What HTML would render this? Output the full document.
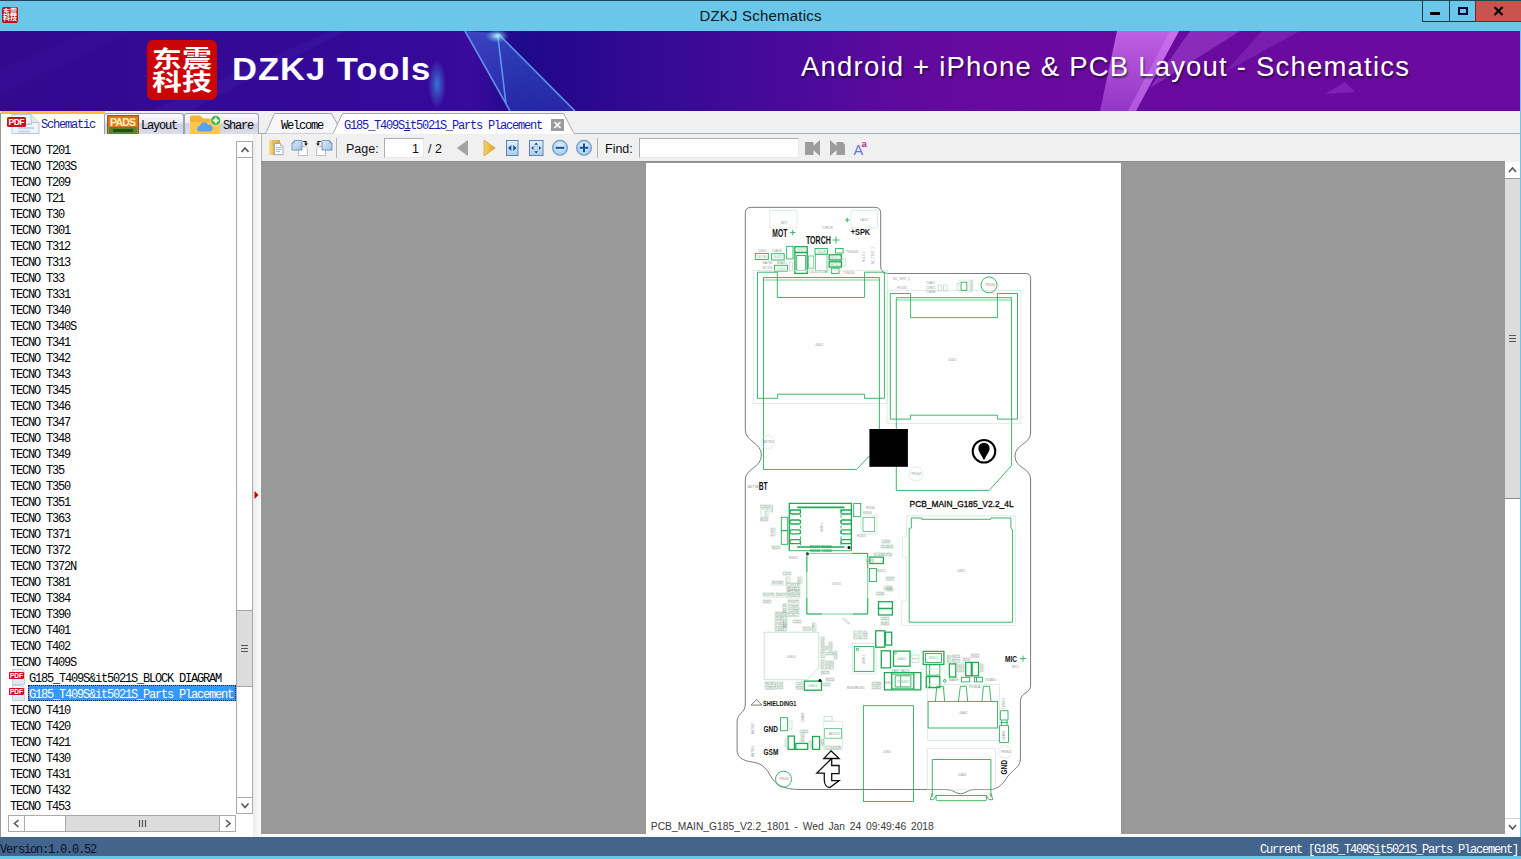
<!DOCTYPE html>
<html lang="en">
<head>
<meta charset="utf-8">
<title>DZKJ Schematics</title>
<style>
*{box-sizing:border-box;margin:0;padding:0}
html,body{width:1521px;height:859px;overflow:hidden;background:#6bc7ea}
body{position:relative;font-family:"Liberation Sans","Noto Sans CJK SC",sans-serif;font-size:12px;color:#000}
.abs{position:absolute}
.mono{font-family:"Liberation Mono","Noto Sans CJK SC",monospace;font-size:12px;letter-spacing:-1.2px;white-space:pre}
/* title bar */
#titlebar{left:0;top:0;width:1521px;height:31px;background:#6bc7ea;border-top:1px solid #1d4656}
#title{left:0;top:6px;width:1521px;text-align:center;font-size:15px;line-height:18px;color:#0a1420;letter-spacing:.2px}
#appicon{left:2px;top:6px;width:16px;height:16px;background:#b5121b;border-radius:2px;overflow:hidden}
#appicon div{position:absolute;left:1px;top:1.500px;width:14px;color:#fff;font-family:"Liberation Sans","Noto Sans CJK SC",sans-serif;font-weight:700;font-size:7px;line-height:6.500px;text-align:center}
.wbtn{top:0;height:21px;border:1px solid #0d3a4c;border-top:none}
/* banner */
#banner{left:0;top:31px;width:1520px;height:80px;overflow:hidden;background:linear-gradient(90deg,#33098f 0%,#35099a 28%,#3a0a9c 31%,#1e0a8a 34.500%,#25088c 36.800%,#340a92 42.800%,#3f0a97 48%,#4b0a9a 52.600%,#5e0a9d 59.200%,#690a9e 65.800%,#6b0a9e 100%)}
#logo{left:147px;top:9px;width:70px;height:60px;background:#cb0505;border-radius:6px;overflow:hidden}
#logo div{position:absolute;left:0;top:8px;width:70px;color:#fff;font-family:"Liberation Sans","Noto Sans CJK SC",sans-serif;font-weight:700;font-size:23px;line-height:23px;text-align:center;transform:scaleX(1.3)}
#brand{left:232px;top:16px;font-size:32px;line-height:44px;font-weight:700;color:#fff;letter-spacing:.9px;white-space:nowrap;transform:scaleX(1.08);transform-origin:0 0}
#slogan{left:801px;top:18px;font-size:27.5px;line-height:36px;color:#fff;text-shadow:1px 2px 2px rgba(0,0,0,.55);white-space:nowrap;letter-spacing:1.2px}
/* main */
#main{left:0;top:111px;width:1520px;height:726px;background:#f0f0f0}

/* left tabs */
#ltabs{left:0;top:0;width:262px;height:23px}
.ltab{top:2px;height:21px;border:1px solid #9aa0b4;border-bottom:none;border-radius:3px 3px 0 0;background:linear-gradient(#fdfdfe,#e9e9f3 45%,#cfd0e2 50%,#dcdcea);}
.ltab .mono{top:5px;line-height:14px}
#tab1{left:1px;top:0;width:104px;height:23px;background:#fff;border:none;border-top:3px solid #fdb940;border-radius:0}
#tabline{left:105px;top:22px;width:1415px;height:1px;background:#a3aec0}
/* list */
#lpanel{left:0;top:23px;width:253px;height:703px;background:#fff;border-left:1px solid #999}
.row{left:0;width:236px;height:16px}
.lbl{top:0;height:16px;line-height:16px;padding:2px 1px 0 1px}
.sel{background:#3399ff;color:#fff;outline:1px dotted #222;outline-offset:-1px;padding-right:3px}
.pdfi{left:7px;top:0;width:16px;height:16px}
.pdfi i{position:absolute;left:4px;top:0;width:13px;height:16px;background:linear-gradient(#f4f8fc,#dbe7f3);border:1px solid #c5d0de;border-radius:0 4px 0 0}
.pdfi b{position:absolute;left:1px;top:3px;width:15px;height:7px;background:#c4141c;color:#fff;font:700 6.500px/7px "Liberation Sans",sans-serif;text-align:center;border-radius:1px;letter-spacing:0}
.sb{background:#fff;border:1px solid #ababab}
.thumb{background:#dcdcdc;border:1px solid #a6a6a6}
.chev{stroke:#555;stroke-width:1.6;fill:none}
#split{left:253px;top:23px;width:8px;height:703px;background:linear-gradient(90deg,#ececec,#fbfbfb)}
/* doc tabs */
#dtabs{left:262px;top:0;width:1258px;height:23px}
/* toolbar */
#tool{left:262px;top:23px;width:1258px;height:28px;background:#f0f0f0;box-shadow:-1px 0 0 #b4b4b4}
#tool .t{top:7px;line-height:17px;font-size:12.500px;color:#111}
.inp{background:#fff;border:1px solid #abadb3;border-right-color:#e3e9ef;border-bottom-color:#e3e9ef}
.sep{top:4px;width:1px;height:20px;background:#b4b4b4}
/* viewer */
#viewer{left:261px;top:50px;width:1244px;height:673px;background:#999;border-top:1px solid #8c8c8c}
#page{left:385px;top:1px;width:475px;height:671px;background:#fff}
#vsb{left:1505px;top:51px;width:15px;height:672px;background:#fff}
#vbot{left:262px;top:723px;width:1258px;height:3px;background:#fafafa}
#status{left:0;top:837px;width:1521px;height:19px;background:#44658b}
</style>
</head>
<body>
<div id="titlebar" class="abs">
  <div id="appicon" class="abs"><div>东震<br>科技</div></div>
  <div id="title" class="abs">DZKJ Schematics</div>
  <div class="abs wbtn" style="left:1422px;width:28px"><div class="abs" style="left:7px;top:11px;width:10px;height:3px;background:#000"></div></div>
  <div class="abs wbtn" style="left:1449px;width:27px"><div class="abs" style="left:8px;top:6px;width:10px;height:8px;border:2px solid #02023a;border-top-width:2.500px"></div></div>
  <div class="abs wbtn" style="left:1475px;width:46px;background:#c9544f;border-color:#6e2a2a;border-right:none"><svg class="abs" style="left:17px;top:5px" width="12" height="10"><path d="M1.500 1l8 8M9.500 1l-8 8" stroke="#000" stroke-width="2.200"/></svg></div>
</div>
<div id="banner" class="abs">
  <svg class="abs" style="left:0;top:0" width="1520" height="80" viewBox="0 31 1520 80">
    <defs>
      <linearGradient id="bm1" x1="0" y1="0" x2="0" y2="1"><stop offset="0" stop-color="#3f7be6" stop-opacity=".5"/><stop offset="1" stop-color="#2a55cf" stop-opacity=".4"/></linearGradient>
      <linearGradient id="bm2" x1="0" y1="0" x2="0" y2="1"><stop offset="0" stop-color="#d070f0" stop-opacity=".85"/><stop offset="1" stop-color="#b055e0" stop-opacity=".6"/></linearGradient>
      <radialGradient id="gl1"><stop offset="0" stop-color="#bff" stop-opacity=".95"/><stop offset="1" stop-color="#5ad" stop-opacity="0"/></radialGradient>
      <radialGradient id="gl2"><stop offset="0" stop-color="#3aa0e8" stop-opacity=".7"/><stop offset="1" stop-color="#3aa0e8" stop-opacity="0"/></radialGradient>
    </defs>
    <path d="M0 70L90 31H130L0 95Z" fill="#4a28b8" opacity=".12"/>
    <path d="M150 111L330 31H345L190 111Z" fill="#4a30c0" opacity=".18"/>
    <path d="M465 31L510 111H575L497.500 33Z" fill="url(#bm1)"/>
    <path d="M465 31L510 111M497.500 33L506 104M497.500 33L575 111" stroke="#6aaeff" stroke-width="1.600" fill="none" opacity=".8"/>
    <ellipse cx="497" cy="36" rx="12" ry="7" fill="url(#gl1)"/>
    <ellipse cx="437" cy="84" rx="9" ry="24" fill="url(#gl2)"/>
    <path d="M1117 31H1179L1136 111H1100Z" fill="url(#bm2)"/>
    <path d="M1170 31H1179L1136 111H1128Z" fill="#e090ff" opacity=".35"/>
    <path d="M1190 31H1240L1150 88Z" fill="#b860e8" opacity=".4"/>
    <path d="M1262 31H1300L1225 72Z" fill="#a050d8" opacity=".3"/>
    <path d="M1325 94L1345 82L1355 92Z" fill="#a050d8" opacity=".35"/>
  </svg>
  <div id="logo" class="abs"><div>东震<br>科技</div></div>
  <div id="brand" class="abs">DZKJ Tools</div>
  <div id="slogan" class="abs">Android + iPhone &amp; PCB Layout - Schematics</div>
</div>
<div id="main" class="abs">
  <div id="tabline" class="abs"></div>
  <div id="ltabs" class="abs">
    <div id="tab1" class="abs ltab">
      <svg class="abs" style="left:5px;top:0" width="36" height="20" viewBox="0 0 36 20"><path d="M6 .5h19l8 8v11H6z" fill="#eef4fb" stroke="#b9c6d8"/><path d="M25 .5v8h8" fill="#dfe9f5" stroke="#b9c6d8"/><rect x="12" y="9" width="14" height="2" fill="#bcd4ec"/><rect x="12" y="13" width="16" height="2" fill="#bcd4ec"/><rect x="12" y="16.5" width="12" height="2" fill="#c9d5e4"/><rect x="1" y="3" width="19" height="10" rx="1.5" fill="#c3131c"/><text x="10.5" y="11" font-family="Liberation Sans,sans-serif" font-weight="700" font-size="8.5" fill="#fff" text-anchor="middle" textLength="16">PDF</text></svg>
      <div class="abs mono" style="left:40px;top:4px;line-height:14px;color:#1818b0">Schematic</div>
    </div>
    <div class="abs ltab" style="left:104px;width:80px">
      <svg class="abs" style="left:2px;top:1px" width="32" height="20" viewBox="0 0 32 20"><rect x=".5" y=".5" width="31" height="19" fill="#d9721c" stroke="#8a5a2a"/><rect x="2" y="2" width="28" height="10" fill="#e07a18"/><rect x="2" y="12" width="28" height="7" fill="#4f8a2a"/><rect x="6" y="14" width="20" height="3" fill="#2d4a22"/><text x="16" y="11" font-family="Liberation Sans,sans-serif" font-weight="700" font-size="10.5" fill="#fff6c8" text-anchor="middle" textLength="26">PADS</text></svg>
      <div class="abs mono" style="left:36px">Layout</div>
    </div>
    <div class="abs ltab" style="left:184px;width:75px">
      <svg class="abs" style="left:5px;top:0" width="34" height="20" viewBox="0 0 34 20"><path d="M0 3.500q0-2 2-2h8l3 3h15q2 0 2 2v14H0z" fill="#f5b335"/><path d="M0 8h30v12H0z" fill="#fcc74c"/><path d="M9 17.500a3 3 0 0 1 1-5.800 4.500 4.500 0 0 1 8.500-.7 3.300 3.300 0 0 1 1.500 6.500z" fill="#58a2ee"/><circle cx="25.700" cy="6.500" r="5" fill="#3dae3a" stroke="#e8f6e0" stroke-width=".8"/><path d="M22.700 6.500h6M25.700 3.500v6" stroke="#fff" stroke-width="2"/></svg>
      <div class="abs mono" style="left:38px">Share</div>
    </div>
  </div>
  <div id="lpanel" class="abs">
<div class="row abs" style="top:7px"><span class="mono lbl abs" style="left:8px">TECNO T201</span></div>
<div class="row abs" style="top:23px"><span class="mono lbl abs" style="left:8px">TECNO T203S</span></div>
<div class="row abs" style="top:39px"><span class="mono lbl abs" style="left:8px">TECNO T209</span></div>
<div class="row abs" style="top:55px"><span class="mono lbl abs" style="left:8px">TECNO T21</span></div>
<div class="row abs" style="top:71px"><span class="mono lbl abs" style="left:8px">TECNO T30</span></div>
<div class="row abs" style="top:87px"><span class="mono lbl abs" style="left:8px">TECNO T301</span></div>
<div class="row abs" style="top:103px"><span class="mono lbl abs" style="left:8px">TECNO T312</span></div>
<div class="row abs" style="top:119px"><span class="mono lbl abs" style="left:8px">TECNO T313</span></div>
<div class="row abs" style="top:135px"><span class="mono lbl abs" style="left:8px">TECNO T33</span></div>
<div class="row abs" style="top:151px"><span class="mono lbl abs" style="left:8px">TECNO T331</span></div>
<div class="row abs" style="top:167px"><span class="mono lbl abs" style="left:8px">TECNO T340</span></div>
<div class="row abs" style="top:183px"><span class="mono lbl abs" style="left:8px">TECNO T340S</span></div>
<div class="row abs" style="top:199px"><span class="mono lbl abs" style="left:8px">TECNO T341</span></div>
<div class="row abs" style="top:215px"><span class="mono lbl abs" style="left:8px">TECNO T342</span></div>
<div class="row abs" style="top:231px"><span class="mono lbl abs" style="left:8px">TECNO T343</span></div>
<div class="row abs" style="top:247px"><span class="mono lbl abs" style="left:8px">TECNO T345</span></div>
<div class="row abs" style="top:263px"><span class="mono lbl abs" style="left:8px">TECNO T346</span></div>
<div class="row abs" style="top:279px"><span class="mono lbl abs" style="left:8px">TECNO T347</span></div>
<div class="row abs" style="top:295px"><span class="mono lbl abs" style="left:8px">TECNO T348</span></div>
<div class="row abs" style="top:311px"><span class="mono lbl abs" style="left:8px">TECNO T349</span></div>
<div class="row abs" style="top:327px"><span class="mono lbl abs" style="left:8px">TECNO T35</span></div>
<div class="row abs" style="top:343px"><span class="mono lbl abs" style="left:8px">TECNO T350</span></div>
<div class="row abs" style="top:359px"><span class="mono lbl abs" style="left:8px">TECNO T351</span></div>
<div class="row abs" style="top:375px"><span class="mono lbl abs" style="left:8px">TECNO T363</span></div>
<div class="row abs" style="top:391px"><span class="mono lbl abs" style="left:8px">TECNO T371</span></div>
<div class="row abs" style="top:407px"><span class="mono lbl abs" style="left:8px">TECNO T372</span></div>
<div class="row abs" style="top:423px"><span class="mono lbl abs" style="left:8px">TECNO T372N</span></div>
<div class="row abs" style="top:439px"><span class="mono lbl abs" style="left:8px">TECNO T381</span></div>
<div class="row abs" style="top:455px"><span class="mono lbl abs" style="left:8px">TECNO T384</span></div>
<div class="row abs" style="top:471px"><span class="mono lbl abs" style="left:8px">TECNO T390</span></div>
<div class="row abs" style="top:487px"><span class="mono lbl abs" style="left:8px">TECNO T401</span></div>
<div class="row abs" style="top:503px"><span class="mono lbl abs" style="left:8px">TECNO T402</span></div>
<div class="row abs" style="top:519px"><span class="mono lbl abs" style="left:8px">TECNO T409S</span></div>
<div class="row abs" style="top:535px"><span class="pdfi abs"><i></i><b>PDF</b></span><span class="mono lbl abs" style="left:27px">G185_T409S&amp;it5021S_BLOCK DIAGRAM</span></div>
<div class="row abs" style="top:551px"><span class="pdfi abs"><i></i><b>PDF</b></span><span class="mono lbl sel abs" style="left:27px">G185_T409S&amp;it5021S_Parts Placement</span></div>
<div class="row abs" style="top:567px"><span class="mono lbl abs" style="left:8px">TECNO T410</span></div>
<div class="row abs" style="top:583px"><span class="mono lbl abs" style="left:8px">TECNO T420</span></div>
<div class="row abs" style="top:599px"><span class="mono lbl abs" style="left:8px">TECNO T421</span></div>
<div class="row abs" style="top:615px"><span class="mono lbl abs" style="left:8px">TECNO T430</span></div>
<div class="row abs" style="top:631px"><span class="mono lbl abs" style="left:8px">TECNO T431</span></div>
<div class="row abs" style="top:647px"><span class="mono lbl abs" style="left:8px">TECNO T432</span></div>
<div class="row abs" style="top:663px"><span class="mono lbl abs" style="left:8px">TECNO T453</span></div>
    <div class="abs sb" style="left:235px;top:7px;width:17px;height:673px"></div>
    <div class="abs sb" style="left:235px;top:7px;width:17px;height:17px"><svg width="15" height="15"><path class="chev" d="M4.5 10l3.5-4 3.500 4"/></svg></div>
    <div class="abs sb" style="left:235px;top:663px;width:17px;height:17px"><svg width="15" height="15"><path class="chev" d="M4.5 5.500l3.500 4 3.500-4"/></svg></div>
    <div class="abs thumb" style="left:235px;top:476px;width:17px;height:77px"><svg width="15" height="75"><path d="M4 34.500h7M4 37.500h7M4 40.500h7" stroke="#555" stroke-width="1.200"/></svg></div>
    <div class="abs sb" style="left:7px;top:681px;width:228px;height:17px"></div>
    <div class="abs sb" style="left:7px;top:681px;width:17px;height:17px"><svg width="15" height="15"><path class="chev" d="M9.500 4l-4 3.500 4 3.500"/></svg></div>
    <div class="abs sb" style="left:218px;top:681px;width:17px;height:17px"><svg width="15" height="15"><path class="chev" d="M6 4l4 3.500-4 3.500"/></svg></div>
    <div class="abs thumb" style="left:64px;top:681px;width:155px;height:17px"><svg width="153" height="15"><path d="M73.500 4v7M76.500 4v7M79.500 4v7" stroke="#555" stroke-width="1.200"/></svg></div>
  </div>
  <div id="split" class="abs"><svg class="abs" style="left:1px;top:356px" width="6" height="10"><path d="M.5 1l4 4-4 4z" fill="#c00000"/></svg></div>
  <div id="dtabs" class="abs">
    <svg class="abs" style="left:0;top:0" width="330" height="23" viewBox="0 0 330 23">
      <path d="M3.500 22.500L12.500 2.500H69.500L80.500 22.500" fill="#f6f6f8" stroke="#a4a4ac"/>
      <path d="M71 22.500L80.500 2.500H301.500L312 22.500" fill="#fff" stroke="#a4a4ac"/>
      <path d="M71.500 22.500H311.500" stroke="#fff" stroke-width="1.500"/>
      <rect x="289" y="8" width="13" height="12" fill="#9c9c9c"/><path d="M292.500 11l6 6M298.500 11l-6 6" stroke="#fff" stroke-width="1.700"/>
    </svg>
    <div class="abs mono" style="left:19px;top:8px;line-height:14px">Welcome</div>
    <div class="abs mono" style="left:82px;top:8px;line-height:14px;color:#1818b0">G185_T409S<u>i</u>t5021S_Parts Placement</div>
  </div>
  <div id="tool" class="abs">
    <div class="abs t" style="left:84px">Page:</div>
    <div class="abs inp" style="left:122px;top:4px;width:40px;height:20px"></div>
    <div class="abs t" style="left:150px">1</div>
    <div class="abs t" style="left:166px">/ 2</div>
    <div class="abs sep" style="left:74px"></div>
    <div class="abs sep" style="left:335px"></div>
    <div class="abs t" style="left:343px">Find:</div>
    <div class="abs inp" style="left:377px;top:4px;width:160px;height:20px"></div>
    <svg class="abs" style="left:0;top:0" width="620" height="28" viewBox="262 134 620 28">
      <defs>
        <linearGradient id="gbook" x1="0" x2="1" y1="0" y2="0"><stop offset="0" stop-color="#f7dc8a"/><stop offset="1" stop-color="#d9a53a"/></linearGradient>
        <linearGradient id="gblue" x1="0" x2="0" y1="0" y2="1"><stop offset="0" stop-color="#e4f0fb"/><stop offset="1" stop-color="#a9cdee"/></linearGradient>
        <linearGradient id="gpg" x1="0" x2="1" y1="0" y2="1"><stop offset="0" stop-color="#dcebf9"/><stop offset="1" stop-color="#9fc3e6"/></linearGradient>
        <linearGradient id="ggold" x1="0" x2="1" y1="0" y2="0"><stop offset="0" stop-color="#f2d263"/><stop offset="1" stop-color="#d9a521"/></linearGradient>
        <radialGradient id="gcirc" cx=".5" cy=".35" r=".7"><stop offset="0" stop-color="#e6f3fd"/><stop offset="1" stop-color="#8fc4ee"/></radialGradient>
      </defs>
      <!-- book/paste -->
      <path d="M269 140.500q0-.5.500-.500h10.500v15h-10.500q-.5 0-.5-.5z" fill="url(#gbook)"/>
      <path d="M273.300 140v15" stroke="#c9962e" stroke-width=".7" opacity=".6"/>
      <path d="M274.500 143.500h6l2.500 2.500v8.700h-8.500z" fill="#fff" stroke="#8f98a8" stroke-width=".8"/>
      <path d="M280.500 143.500v2.500h2.500" fill="#e6eef6" stroke="#8f98a8" stroke-width=".6"/>
      <path d="M276 147.500h5.500M276 149.500h5.500M276 151.500h4" stroke="#7fb0c4" stroke-width=".8"/>
      <!-- copy pages 1 -->
      <path d="M298.500 146.500h6.500l2.500 2.500v6.500h-9z" fill="#fff" stroke="#b0b6c0" stroke-width=".9"/>
      <path d="M294.500 140.500h7.500v9.500h-10v-7z" fill="url(#gpg)" stroke="#6f8fb4" stroke-width=".9"/>
      <path d="M292 143h2.500v-2.500" fill="none" stroke="#6f8fb4" stroke-width=".7"/>
      <path d="M303.300 141.500h2.700v2.300" stroke="#111" stroke-width="1.200" fill="none"/><path d="M304 143.500h4l-2 2.200z" fill="#111"/>
      <!-- copy pages 2 -->
      <path d="M319 146.500h6.500v9h-9v-6.500z" fill="#fff" stroke="#b0b6c0" stroke-width=".9"/>
      <path d="M322 140.500h7.500l2.500 2.500v7h-10z" fill="url(#gpg)" stroke="#6f8fb4" stroke-width=".9"/>
      <path d="M329.500 140.500v2.500h2.500" fill="none" stroke="#6f8fb4" stroke-width=".7"/>
      <path d="M320.700 141.500h-2.700v2.300" stroke="#111" stroke-width="1.200" fill="none"/><path d="M316 143.500h4l-2 2.200z" fill="#111"/>
      <!-- prev / next -->
      <path d="M468 140v16l-11.200-8z" fill="#a2a2a2"/>
      <path d="M484 140v16l11.200-8z" fill="url(#ggold)" stroke="#c99a22" stroke-width=".6"/>
      <!-- fit width -->
      <rect x="506.500" y="140.500" width="11.500" height="15" fill="url(#gblue)" stroke="#5c82b4"/>
      <path d="M511.300 145v6l-3.300-3zM513.200 145v6l3.300-3z" fill="#1d4f8c"/>
      <!-- fit page -->
      <rect x="529.500" y="140.500" width="13.500" height="15" fill="url(#gblue)" stroke="#5c82b4"/>
      <path d="M536.200 142.500l2 2.200h-4zM536.200 153.500l2-2.200h-4zM531.200 148l2.200-2v4zM541.200 148l-2.200-2v4z" fill="#1d4f8c"/>
      <rect x="534.700" y="146.500" width="3" height="3" fill="#dce9f6" stroke="#9ab4d2" stroke-width=".6"/>
      <!-- zoom out / in -->
      <circle cx="560" cy="147.800" r="7.400" fill="url(#gcirc)" stroke="#6f96c4" stroke-width="1.100"/>
      <path d="M555.800 147.800h8.400" stroke="#1d4f8c" stroke-width="2"/>
      <circle cx="584" cy="147.800" r="7.400" fill="url(#gcirc)" stroke="#6f96c4" stroke-width="1.100"/>
      <path d="M579.800 147.800h8.400M584 143.600v8.400" stroke="#1d4f8c" stroke-width="2"/>
      <!-- find prev/next -->
      <path d="M805 142h8.500v13H805z" fill="#9c9c9c"/><path d="M820 140v16l-9-8z" fill="#9c9c9c"/>
      <path d="M836.500 142h6l2.500 2.500v10.500h-8.500z" fill="#9c9c9c"/><path d="M830 140v16l9-8z" fill="#9c9c9c"/>
      <text x="853.500" y="155" font-family="Liberation Sans,sans-serif" font-size="14.500" fill="#6f6fe0">A</text>
      <text x="861.500" y="147.300" font-family="Liberation Sans,sans-serif" font-size="9.500" font-weight="700" fill="#b0308c">a</text>
    </svg>
  </div>
  <div id="viewer" class="abs">
    <div id="page" class="abs">
<svg class="abs" style="left:0;top:0" width="475" height="671" viewBox="646 163 475 671">
<style>
.g{fill:none;stroke:#25b15a;stroke-width:.9}
.g2{fill:none;stroke:#1cab51;stroke-width:1.3}
.gt{fill:none;stroke:#3dbb6d;stroke-width:.7}
.p{fill:none;stroke:#b7d9c3;stroke-width:.7}
.pp{fill:none;stroke:#d3e4d9;stroke-width:.7}
.o{fill:none;stroke:#444;stroke-width:.7}
.lb{font-family:"Liberation Sans",sans-serif;font-weight:700;fill:#111}
.tt{font-family:"Liberation Sans",sans-serif;fill:#8e9891;font-size:3px}
.tg{font-family:"Liberation Sans",sans-serif;fill:#6fbf8b;font-size:3px}
</style>
<!-- board outline -->
<path class="o" d="M751.300 207.300H874.700Q880.700 207.300 880.700 213.300V266Q880.700 273.500 888 273.500H1025.600Q1030.600 273.500 1030.600 278.500V433C1030.600 444 1015 444 1015 456.200C1015 468 1030.600 468 1030.600 479V685C1030.600 694 1020.400 692 1020.400 701V758C1020.400 768 1012 770 1008 776C1003 784 998 789.500 990 789.500H974C968 789.500 966 793.700 960.500 793.700C955 793.700 953 789.500 947 789.500H800C782 789.500 775 784 770 775C765 766 760 763 752 762C742 760.500 737.100 757 737.100 750V722C737.100 712 745.300 714 745.300 704V480C745.300 468 761.400 468 761.400 455C761.400 442 745.300 442 745.300 430V213.300Q745.300 207.300 751.300 207.300Z"/>
<!-- top labels -->
<rect class="pp" x="769.800" y="210.500" width="27.200" height="17.500"/>
<rect class="pp" x="851" y="210.500" width="26.500" height="17.500"/>
<text class="tt" x="781" y="224">MOT</text><text class="tt" x="860" y="221">LA/JC</text><text class="tt" x="822" y="229">TORCH</text>
<text class="lb" x="772.300" y="236.800" font-size="10" textLength="15" lengthAdjust="spacingAndGlyphs">MOT</text>
<text class="lb" x="805.900" y="244.200" font-size="10" textLength="25" lengthAdjust="spacingAndGlyphs">TORCH</text>
<text class="lb" x="850.700" y="235.300" font-size="9.500" textLength="19.500" lengthAdjust="spacingAndGlyphs">+SPK</text>
<path class="g" d="M790 232.500h5.400M792.700 229.800v5.400M832.500 240h7M836 236.500v7M845 220h4.600M847.300 217.700v4.600" stroke-width=".9"/>
<text class="tt" transform="translate(865,262) rotate(-90)" font-size="3.500">HOLE1</text>
<text class="tt" transform="translate(873.500,264) rotate(-90)" font-size="3.500">NC_TEST_1</text>
<!-- small parts row -->
<rect class="g" x="755.300" y="253.500" width="13" height="6"/>
<rect class="g" x="771.600" y="253.700" width="12.600" height="6.300"/>
<rect class="g" x="786.700" y="246.400" width="6.300" height="12.500"/>
<rect class="g2" x="794.900" y="246.700" width="12.300" height="5.800"/>
<rect class="g2" x="794.900" y="252.500" width="12.300" height="20.900"/>
<rect class="g" x="796.700" y="255.500" width="9" height="15"/>
<rect class="g" x="774.500" y="265.300" width="13" height="5.800"/>
<rect class="gt" x="808.500" y="256" width="5.300" height="12.200"/>
<rect class="g" x="815" y="248.600" width="12.400" height="5.600"/>
<rect class="gt" x="815.500" y="254.200" width="11.500" height="16.300"/>
<rect class="g2" x="829.200" y="254.800" width="12.200" height="5.200"/>
<rect class="g2" x="829.200" y="261.800" width="12.200" height="5.200"/>
<rect class="g" x="835.600" y="248.400" width="7.500" height="4.600"/>
<rect class="g" x="831.600" y="268.200" width="7.400" height="5.200"/>
<rect class="p" x="843" y="258" width="2.500" height="8"/><rect class="p" x="789.500" y="262" width="3" height="9"/>
<text class="tt" x="758" y="252">C0001</text><text class="tt" x="772" y="252">C0A1B</text><text class="tt" x="763" y="264">EA70K</text><text class="tt" x="763" y="269">EC70K</text><text class="tt" x="777" y="264">B0A0C</text>
<text class="tt" x="846" y="252.500">TVS0001</text><text class="tt" x="843" y="274">TVS0U6</text><text class="tt" x="809" y="272.500">C0C01 E10AK</text>
<text class="tg" x="757.500" y="257.800">NCYEL</text><text class="tg" x="774" y="258">NJ0YY</text><text class="tg" x="797" y="251">VOLTD</text><text class="tg" x="818" y="253">NL1EI</text><text class="tg" x="831" y="259">HC5L2Y</text><text class="tg" x="831" y="266">HC0L2</text><text class="tg" x="777" y="269.500">LLYLL</text>
<!-- connector 1 -->
<rect class="pp" x="753.500" y="270.500" width="133.800" height="133"/>
<path class="g" d="M757.500 272.200H777.300V297.500H864.600V272.200H884.400V398.300H864.600V394.200H777.700V398.300H757.500Z"/>
<path class="g" d="M869.300 456L856.500 469.500H763.500V277.500H879.400V429"/>
<path class="gt" d="M763.500 280H879.400" />
<text class="tt" x="815" y="345.500">J0001</text>
<circle class="pp" cx="768" cy="442" r="6.500" stroke="#c4d0c8"/><text class="tt" x="763" y="443">ANT301</text>
<!-- connector 2 -->
<rect class="pp" x="887" y="290.600" width="134" height="132.700"/>
<path class="g" d="M890.300 293.500H910.600V317.700H997.400V293.500H1017.500V419.100H997.300V415.200H910.500V419.100H890.300Z"/>
<path class="g" d="M896.300 297.700H1011.600V465.500L989.200 490.400H896.300Z"/>
<path class="gt" d="M896.300 300H1011.600"/>
<text class="tt" x="948" y="361">J0002</text>
<circle class="g" cx="989" cy="284.900" r="8"/><text x="985" y="286" font-size="3" fill="#c77" font-family="Liberation Sans,sans-serif">TP0005</text>
<rect class="g" x="961" y="282.200" width="5.800" height="8.200"/><rect class="p" x="957" y="283.500" width="3.500" height="7"/><rect class="pp" x="959" y="280" width="10" height="12"/>
<text class="tt" x="893" y="280" font-size="3.500">NC_TEST_2</text><text class="tt" x="897" y="289" font-size="3.500">HOLE2</text>
<text class="tt" x="926" y="284">C0A07</text><text class="tt" x="926" y="288.500">C0B0C</text><text class="tt" x="926" y="293">C0B0E</text>
<rect class="p" x="938" y="285" width="3.500" height="6"/><rect class="p" x="943.500" y="285" width="3.500" height="6"/>
<text class="tt" transform="translate(973,292) rotate(-90)">TVS0003</text>
<!-- black square & pin -->
<rect x="869.400" y="429" width="38.500" height="37.800" fill="#000"/>
<circle cx="984" cy="451.300" r="11.300" fill="#fff" stroke="#000" stroke-width="2"/>
<path d="M984 460.200C981 454.500 978.400 451.500 978.400 448.300A5.600 5.600 0 0 1 989.600 448.300C989.600 451.500 987 454.500 984 460.200Z" fill="#000"/>
<circle class="pp" cx="916.100" cy="473.900" r="7" stroke="#c4d0c8"/><text class="tt" x="911" y="475">TP0001</text>
<!-- BT -->
<text class="lb" x="758.700" y="489.700" font-size="10" textLength="9" lengthAdjust="spacingAndGlyphs">BT</text>
<text class="tt" x="748" y="488" font-size="2.500">ANT BB</text>
<text class="lb" x="909.600" y="506.900" font-size="9.600" textLength="104" lengthAdjust="spacingAndGlyphs" style="font-weight:400;stroke:#111;stroke-width:.35">PCB_MAIN_G185_V2.2_4L</text>
<!--PCB2S-->
<!-- 8-pin chip -->
<path class="g2" d="M789.300 550.700V503.300H851.400V550.700"/>
<path class="g" d="M789.300 550.700H851.400"/>
<path d="M797.200 507.300H844.400M797.200 547H844.400" stroke="#1cab51" stroke-width="1.700" fill="none"/>
<path d="M800.600 509V546M841 509V546" stroke="#19a84e" stroke-width=".9" stroke-dasharray="3 2.500" fill="none"/>
<g class="g2" stroke-width="1.100"><rect x="790" y="510" width="10.400" height="4" rx="1.500"/><rect x="790" y="520" width="10.400" height="4" rx="1.500"/><rect x="790" y="529.800" width="10.400" height="4" rx="1.500"/><rect x="790" y="539.700" width="10.400" height="4" rx="1.500"/>
<rect x="841" y="510" width="10.400" height="4" rx="1.500"/><rect x="841" y="520" width="10.400" height="4" rx="1.500"/><rect x="841" y="529.800" width="10.400" height="4" rx="1.500"/><rect x="841" y="539.700" width="10.400" height="4" rx="1.500"/></g>
<rect class="g" x="781.300" y="517.300" width="6.400" height="13.400"/><rect class="g" x="781.300" y="530.700" width="6.400" height="13.600"/>
<rect class="g" x="853.700" y="503.500" width="7" height="13.200"/>
<rect class="gt" x="863" y="517.300" width="11.700" height="14.200"/><rect class="pp" x="861" y="515" width="16" height="19"/>
<text class="tt" transform="translate(823,532) rotate(-90)">U0301</text>
<text x="810" y="547.500" font-size="4.200" font-weight="700" fill="#19a84e" font-family="Liberation Sans,sans-serif" textLength="21.500" lengthAdjust="spacingAndGlyphs">R0307 R0308</text>
<text x="810" y="552.300" font-size="4.200" font-weight="700" fill="#19a84e" font-family="Liberation Sans,sans-serif" textLength="21.500" lengthAdjust="spacingAndGlyphs">R0306 C0304</text>
<circle cx="849" cy="547.600" r="1.500" fill="#000"/><circle cx="807.400" cy="553.700" r="1.500" fill="#000"/>
<!-- cpu -->
<path class="gt" d="M806.800 553.400H867.700V614H806.800Z"/>
<path class="g" d="M852 553.400H867.700V568M806.800 598V614H822M853 614H867.700V598M806.800 556V572"/>
<text class="tt" x="832" y="585">U0701</text>
<rect class="g2" x="869.800" y="557.100" width="13.600" height="6.400"/>
<rect class="g" x="869.400" y="568.500" width="7" height="13.100"/>
<rect class="g2" x="878.500" y="601.700" width="13.900" height="6.800" stroke-width="1.300"/><rect class="g2" x="878.500" y="608.500" width="13.900" height="6.500" stroke-width="1.300"/>
<!-- tiny parts left of cpu -->
<g class="p"><rect x="760.500" y="505" width="9" height="3"/><rect x="761" y="509" width="7" height="8"/><rect x="760.500" y="518" width="7.500" height="3"/><rect x="770" y="505" width="2.500" height="7"/>
<rect x="771" y="528" width="4" height="8"/><rect x="772" y="546" width="8" height="3"/>
<rect x="783" y="572" width="8" height="3"/><rect x="786" y="577" width="4" height="6"/><rect x="772" y="581" width="11" height="4"/><rect x="786" y="583" width="13" height="4"/><rect x="798" y="577" width="4" height="7"/>
<rect x="787" y="587" width="13" height="3"/><rect x="787" y="590.500" width="13" height="3"/><rect x="763" y="593" width="11" height="4"/><rect x="776" y="593" width="11" height="4"/><rect x="788" y="594" width="12" height="4"/><rect x="763" y="600" width="8" height="3"/>
<rect x="788" y="600" width="11" height="4"/><rect x="788" y="605" width="11" height="4"/><rect x="788" y="609" width="11" height="3.500"/><rect x="788" y="613" width="11" height="3.500"/><rect x="783" y="604" width="3" height="9"/>
<rect x="775" y="612" width="12" height="3.500"/><rect x="775" y="616" width="12" height="3.500"/><rect x="775" y="620" width="12" height="3.500"/><rect x="775" y="624" width="12" height="3.500"/><rect x="775" y="628" width="8" height="3"/><rect x="783.500" y="622" width="3" height="9"/>
<rect x="793" y="620" width="8" height="3"/><rect x="803" y="627" width="8" height="3.500"/><rect x="812.500" y="623" width="3.500" height="8"/>
<rect x="821" y="637" width="3" height="8"/><rect x="821" y="646" width="7" height="3.500"/><rect x="821" y="650" width="4" height="8"/><rect x="826" y="652" width="8" height="3"/><rect x="829" y="642" width="3" height="9"/><rect x="834" y="651" width="3" height="8"/>
<rect x="821" y="660" width="4" height="9"/><rect x="826" y="661" width="3.500" height="8"/><rect x="830" y="661" width="3.500" height="8"/><rect x="821" y="671" width="8" height="3"/>
<rect x="765" y="682" width="9" height="3"/><rect x="765" y="686.500" width="9" height="3"/><rect x="775" y="682" width="3" height="7"/><rect x="779" y="682" width="4" height="3"/><rect x="779" y="686" width="4" height="3"/>
<rect x="796" y="682" width="7" height="3"/><rect x="796" y="686.500" width="7" height="3"/><rect x="826" y="678" width="8" height="3"/><rect x="823" y="683" width="7" height="3"/>
<rect x="854" y="631" width="4" height="8"/><rect x="859" y="631" width="4" height="8"/><rect x="864" y="631" width="3" height="8"/>
<rect x="872" y="682" width="9" height="3"/><rect x="872" y="686" width="9" height="3"/>
<rect x="884" y="586" width="8" height="3.500"/><rect x="876" y="592" width="8" height="3"/><rect x="881" y="617" width="8" height="3"/><rect x="881" y="622" width="8" height="3"/>
<rect x="882" y="540" width="8" height="3"/><rect x="881" y="545" width="12" height="3"/><rect x="874" y="553" width="18" height="3"/><rect x="866" y="559" width="8" height="3"/>
<rect x="886" y="577" width="8" height="3.500"/><rect x="886" y="588" width="7" height="3"/></g>
<g class="tt"><text x="866" y="508.500">R0336</text><text x="863" y="514">R0306</text><text x="857" y="537">R0325</text><text x="789" y="558.500">R0302</text><text x="877" y="572">R0372</text><text x="847" y="688.500">R0903R0905</text><text x="884" y="683.500">R0902</text><text x="842" y="619" transform="rotate(40 842 619)">C0726</text></g>
<!-- pale big ic -->
<path class="p" d="M764.200 632.200H818.700V668L807 679.700H764.200Z" stroke="#c3d8ca"/>
<text class="tt" x="787" y="658">U0601</text>
<rect class="g2" x="804.400" y="681.100" width="17.100" height="9.100" stroke-width="1.300"/><text class="tg" x="808" y="687">U0B14</text>
<circle cx="820" cy="680.400" r="1.500" fill="#000"/>
<!-- right-middle parts -->
<rect class="pp" x="852.200" y="643.400" width="24" height="30.500"/>
<rect class="g" x="854.300" y="646.500" width="19.600" height="25.100"/><rect class="gt" x="856.400" y="648.300" width="2" height="2"/>
<text class="tt" transform="translate(865,664) rotate(-90)" fill="#88a">U0901</text>
<rect class="g2" x="875.700" y="630.800" width="9" height="16.400" stroke-width="1.300"/>
<rect class="g2" x="885.500" y="632.200" width="6.200" height="12.900" stroke-width="1.300"/>
<rect class="g2" x="881.300" y="650.800" width="9.200" height="17.100" stroke-width="1.300"/>
<rect class="g2" x="893.500" y="651.100" width="16.500" height="15.100" stroke-width="1.300"/><circle class="gt" cx="895.500" cy="653" r="1"/>
<text class="tt" x="897" y="660">U0901</text>
<rect class="p" x="912" y="655" width="7" height="3.500"/><rect class="p" x="912" y="659" width="7" height="3.500"/>
<rect class="g2" x="923.200" y="651.400" width="20.700" height="13" stroke-width="1.300"/><rect class="g" x="925.500" y="653.500" width="15.900" height="8.900"/>
<text class="tg" x="929" y="659">R0801</text>
<path class="g" d="M926.300 664.800H939.800V675.200H926.300ZM929.600 664.800V675.200"/>
<path class="g2" d="M926.300 676.600H939.800V687.500H926.300ZM929.600 676.600V687.500" stroke-width="1.300"/>
<rect class="pp" x="921" y="669" width="24" height="20"/>
<path class="g2" d="M884.400 672.700H920.800V689.800H884.400ZM891.700 672.700V689.800M913.800 672.700V689.800" stroke-width="1.300"/>
<path class="g" d="M895.200 675.800H910.900V686.900H895.200ZM900.700 675.800V686.900M891.700 674.200H913.800M891.700 688.300H913.800"/>
<text class="tg" x="897" y="683" font-size="3.500">TVS0F02</text><text class="tt" x="892" y="671.500">FANT 0A0O2</text>
<rect class="g2" x="949.400" y="663.900" width="6.400" height="13.100" stroke-width="1.200"/>
<rect class="g2" x="965.700" y="662.400" width="5.600" height="13.400" stroke-width="1.200"/>
<rect class="g2" x="972.100" y="662.400" width="6.400" height="13.400" stroke-width="1.200"/>
<rect class="g" x="961.400" y="677.300" width="8.300" height="4.600"/><rect class="g" x="974.400" y="677.300" width="8.200" height="4.600"/><path class="g" d="M976.500 677.300V681.900"/>
<circle class="g" cx="944.700" cy="680.800" r="1.300"/>
<g class="p"><rect x="947.500" y="655.500" width="3" height="7"/><rect x="952" y="655" width="8" height="3"/><rect x="952" y="659.500" width="8" height="3"/><rect x="957" y="664" width="3" height="8"/><rect x="961" y="664" width="3" height="8"/><rect x="971" y="654" width="8" height="3.500"/><rect x="963" y="658" width="7" height="3"/><rect x="980" y="664" width="3" height="8"/></g>
<text class="tt" x="985" y="681">VS0A01</text><text class="tt" x="949" y="681">BAA0F</text><text class="tt" x="969" y="688">FU0B0A</text>
<text class="lb" x="1005" y="661.600" font-size="9.800" textLength="12" lengthAdjust="spacingAndGlyphs">MIC</text>
<path class="g" d="M1020 658.600h6M1023 655.600v6" stroke-width=".9"/><text class="tt" x="1012" y="668" font-size="2.500">MIC1</text>
<!-- big card holder -->
<path class="pp" d="M906.600 515.900H1015.300V625.400H901.700V601H906.600V557H902.600V537H906.600Z" stroke="#c9dfd1"/>
<path class="g" d="M909.200 528.400L911.300 528V518H921.800V519.300H990.800V518H1010.900V528L1012.600 530V622.200H909.200Z"/>
<text class="tt" x="957" y="572">J0801</text>
<!-- lower-left -->
<path class="o" d="M751.100 705.100L756.500 699.600L761.900 705.100Z" stroke-width="1"/>
<text class="lb" x="763" y="705.800" font-size="7.200" textLength="33.400" lengthAdjust="spacingAndGlyphs">SHIELDING1</text>
<text class="lb" x="763.500" y="731.800" font-size="9.600" textLength="14.400" lengthAdjust="spacingAndGlyphs">GND</text>
<text class="lb" x="763.500" y="755.100" font-size="9.600" textLength="14.800" lengthAdjust="spacingAndGlyphs">GSM</text>
<text class="tt" transform="translate(754,734) rotate(-90)">ANT302</text><text class="tt" transform="translate(754,757) rotate(-90)">ANT301</text>
<rect class="g" x="780.400" y="717.700" width="7" height="13.100"/><rect class="p" x="789" y="721" width="3" height="8"/>
<rect class="g2" x="788.100" y="736.100" width="6.300" height="13.300" stroke-width="1.300"/>
<rect class="g2" x="795.800" y="743.400" width="11.900" height="6" stroke-width="1.300"/>
<rect class="g2" x="812.600" y="736.500" width="7" height="12.900" stroke-width="1.300"/>
<rect class="gt" x="824.700" y="728.400" width="16.800" height="9.800" stroke-width="1"/><text class="tt" x="829" y="735">ANT201</text>
<rect class="pp" x="823.800" y="721.400" width="18.700" height="28"/><rect class="p" x="824" y="716.600" width="8.100" height="4.400"/>
<g class="p"><rect x="785" y="739" width="2.500" height="8"/><rect x="800" y="730" width="8" height="3"/><rect x="801" y="734" width="3" height="8"/><rect x="809" y="741" width="2.500" height="7"/><rect x="821" y="739" width="3" height="7"/><rect x="825" y="746" width="16" height="3.500"/></g>
<text class="tt" transform="translate(804,722) rotate(-90)">C0A0B</text>
<circle class="g" cx="783.500" cy="779.200" r="8"/><text x="779" y="780.200" font-size="3" fill="#c77" font-family="Liberation Sans,sans-serif">TP0002</text>
<path d="M831 750.800L839.100 758.500H823.800ZM831.600 758.500L816.800 773.100H824.300V780C824.300 785 827 787.500 829.900 787.500L839.100 780.600H831.700V773.600H839.100V765.500H831.700V758.500" fill="#fff" stroke="#111" stroke-width="1.300" stroke-linejoin="miter"/>
<!-- tall box -->
<rect class="g" x="863.400" y="705.700" width="50" height="95.700"/><text class="tt" x="883" y="753">J0901</text>
<!-- connector N -->
<rect class="pp" x="927.400" y="684.500" width="72" height="55.800"/>
<rect class="g" x="928.100" y="701.400" width="69.500" height="26.600"/>
<path class="g" d="M935.400 701.400L936.800 686.300H943.300L944.700 701.400M958.400 701.400L960.400 686.300H966.200L967.700 701.400M982 701.400L983.400 686.300H989.500L991 701.400"/>
<text class="tt" x="959" y="714">J0A01</text>
<path class="g" d="M1000.400 710.700H1008V720H1000.400ZM1001.500 720V725.600M1007 720V725.600M999.400 725.600H1008.500V742.400H999.400Z"/>
<path class="g" d="M1000.400 722.500H1008" stroke-width="1.600"/>
<text class="tt" transform="translate(1005,709) rotate(-90)" font-size="3.500">TVS0E1</text><text class="tt" transform="translate(1005,740) rotate(-90)">C0A0K</text>
<circle class="pp" cx="1004.800" cy="751.900" r="6.300" stroke="#c4ccc6"/><text class="tt" x="1000.500" y="753">TP0B01</text>
<text class="lb" transform="translate(1006.600,774.600) rotate(-90)" font-size="9.600" textLength="14.600" lengthAdjust="spacingAndGlyphs">GND</text>
<!-- usb -->
<path class="pp" d="M927.400 748.400H995.500V789.900H927.400Z"/>
<path class="g" d="M932.300 796.900V759.500H990.900V796.900M932.300 793L930.200 799.700H933.500L936.100 795.500H986.400L989 799.700H992.800L990.900 793M936.100 795.500V799.500Q936.100 800.700 937.500 800.700H985Q986.400 800.700 986.400 799.500V795.500"/>
<text class="tt" x="958" y="776">J0A02</text>
<!-- footer -->
<text x="650.800" y="829.700" font-family="Liberation Sans,sans-serif" font-size="10.600" fill="#3a3a3a" textLength="283" lengthAdjust="spacingAndGlyphs" word-spacing="2">PCB_MAIN_G185_V2.2_1801 - Wed Jan 24 09:49:46 2018</text>
<g class="tt auto"><text x="761.0" y="507.5" font-size="2.8" textLength="8.0" lengthAdjust="spacingAndGlyphs">C0360</text><text transform="translate(766.7,516.5) rotate(-90)" font-size="3.2" textLength="7.0" lengthAdjust="spacingAndGlyphs">C0915</text><text x="761.0" y="520.5" font-size="2.8" textLength="6.5" lengthAdjust="spacingAndGlyphs">R0183</text><text transform="translate(772.0,511.5) rotate(-90)" font-size="2.4" textLength="6.0" lengthAdjust="spacingAndGlyphs">C0266</text><text transform="translate(774.3,535.5) rotate(-90)" font-size="3.2" textLength="7.0" lengthAdjust="spacingAndGlyphs">C0418</text><text x="772.5" y="548.5" font-size="2.8" textLength="7.0" lengthAdjust="spacingAndGlyphs">R0191</text><text x="783.5" y="574.5" font-size="2.8" textLength="7.0" lengthAdjust="spacingAndGlyphs">C0199</text><text transform="translate(789.3,582.5) rotate(-90)" font-size="3.2" textLength="5.0" lengthAdjust="spacingAndGlyphs">R0130</text><text x="772.5" y="584.3" font-size="3.2" textLength="10.0" lengthAdjust="spacingAndGlyphs">R0346</text><text x="786.5" y="586.3" font-size="3.2" textLength="12.0" lengthAdjust="spacingAndGlyphs">C0919</text><text transform="translate(801.3,583.5) rotate(-90)" font-size="3.2" textLength="6.0" lengthAdjust="spacingAndGlyphs">C0921</text><text x="787.5" y="589.5" font-size="2.8" textLength="12.0" lengthAdjust="spacingAndGlyphs">R0451</text><text x="787.5" y="593.0" font-size="2.8" textLength="12.0" lengthAdjust="spacingAndGlyphs">R0290</text><text x="763.5" y="596.3" font-size="3.2" textLength="10.0" lengthAdjust="spacingAndGlyphs">R0478</text><text x="776.5" y="596.3" font-size="3.2" textLength="10.0" lengthAdjust="spacingAndGlyphs">R0679</text><text x="788.5" y="597.3" font-size="3.2" textLength="11.0" lengthAdjust="spacingAndGlyphs">R0643</text><text x="763.5" y="602.5" font-size="2.8" textLength="7.0" lengthAdjust="spacingAndGlyphs">D0331</text><text x="788.5" y="603.3" font-size="3.2" textLength="10.0" lengthAdjust="spacingAndGlyphs">R0587</text><text x="788.5" y="608.3" font-size="3.2" textLength="10.0" lengthAdjust="spacingAndGlyphs">C0849</text><text x="788.5" y="611.9" font-size="3.2" textLength="10.0" lengthAdjust="spacingAndGlyphs">C0286</text><text x="788.5" y="615.9" font-size="3.2" textLength="10.0" lengthAdjust="spacingAndGlyphs">C0627</text><text transform="translate(785.5,612.5) rotate(-90)" font-size="2.8" textLength="8.0" lengthAdjust="spacingAndGlyphs">R0118</text><text x="775.5" y="614.9" font-size="3.2" textLength="11.0" lengthAdjust="spacingAndGlyphs">R0655</text><text x="775.5" y="618.9" font-size="3.2" textLength="11.0" lengthAdjust="spacingAndGlyphs">R0897</text><text x="775.5" y="622.9" font-size="3.2" textLength="11.0" lengthAdjust="spacingAndGlyphs">C0247</text><text x="775.5" y="626.9" font-size="3.2" textLength="11.0" lengthAdjust="spacingAndGlyphs">L0204</text><text x="775.5" y="630.5" font-size="2.8" textLength="7.0" lengthAdjust="spacingAndGlyphs">L0846</text><text transform="translate(786.0,630.5) rotate(-90)" font-size="2.8" textLength="8.0" lengthAdjust="spacingAndGlyphs">L0607</text><text x="793.5" y="622.5" font-size="2.8" textLength="7.0" lengthAdjust="spacingAndGlyphs">C0391</text><text x="803.5" y="629.9" font-size="3.2" textLength="7.0" lengthAdjust="spacingAndGlyphs">R0134</text><text transform="translate(815.4,630.5) rotate(-90)" font-size="3.2" textLength="7.0" lengthAdjust="spacingAndGlyphs">C0466</text><text transform="translate(823.5,644.5) rotate(-90)" font-size="2.8" textLength="7.0" lengthAdjust="spacingAndGlyphs">D0812</text><text x="821.5" y="648.9" font-size="3.2" textLength="6.0" lengthAdjust="spacingAndGlyphs">R0784</text><text transform="translate(824.3,657.5) rotate(-90)" font-size="3.2" textLength="7.0" lengthAdjust="spacingAndGlyphs">C0784</text><text x="826.5" y="654.5" font-size="2.8" textLength="7.0" lengthAdjust="spacingAndGlyphs">L0756</text><text transform="translate(831.5,650.5) rotate(-90)" font-size="2.8" textLength="8.0" lengthAdjust="spacingAndGlyphs">C0312</text><text transform="translate(836.5,658.5) rotate(-90)" font-size="2.8" textLength="7.0" lengthAdjust="spacingAndGlyphs">C0430</text><text transform="translate(824.3,668.5) rotate(-90)" font-size="3.2" textLength="8.0" lengthAdjust="spacingAndGlyphs">R0344</text><text transform="translate(828.9,668.5) rotate(-90)" font-size="3.2" textLength="7.0" lengthAdjust="spacingAndGlyphs">C0368</text><text transform="translate(832.9,668.5) rotate(-90)" font-size="3.2" textLength="7.0" lengthAdjust="spacingAndGlyphs">C0628</text><text x="821.5" y="673.5" font-size="2.8" textLength="7.0" lengthAdjust="spacingAndGlyphs">R0178</text><text x="765.5" y="684.5" font-size="2.8" textLength="8.0" lengthAdjust="spacingAndGlyphs">R0766</text><text x="765.5" y="689.0" font-size="2.8" textLength="8.0" lengthAdjust="spacingAndGlyphs">C0860</text><text transform="translate(777.5,688.5) rotate(-90)" font-size="2.8" textLength="6.0" lengthAdjust="spacingAndGlyphs">C0237</text><text x="779.5" y="684.5" font-size="2.8" textLength="3.0" lengthAdjust="spacingAndGlyphs">C0259</text><text x="779.5" y="688.5" font-size="2.8" textLength="3.0" lengthAdjust="spacingAndGlyphs">C0209</text><text x="796.5" y="684.5" font-size="2.8" textLength="6.0" lengthAdjust="spacingAndGlyphs">C0915</text><text x="796.5" y="689.0" font-size="2.8" textLength="6.0" lengthAdjust="spacingAndGlyphs">R0113</text><text x="826.5" y="680.5" font-size="2.8" textLength="7.0" lengthAdjust="spacingAndGlyphs">R0724</text><text x="823.5" y="685.5" font-size="2.8" textLength="6.0" lengthAdjust="spacingAndGlyphs">C0671</text><text transform="translate(857.3,638.5) rotate(-90)" font-size="3.2" textLength="7.0" lengthAdjust="spacingAndGlyphs">C0877</text><text transform="translate(862.3,638.5) rotate(-90)" font-size="3.2" textLength="7.0" lengthAdjust="spacingAndGlyphs">R0512</text><text transform="translate(866.5,638.5) rotate(-90)" font-size="2.8" textLength="7.0" lengthAdjust="spacingAndGlyphs">C0647</text><text x="872.5" y="684.5" font-size="2.8" textLength="8.0" lengthAdjust="spacingAndGlyphs">D0380</text><text x="872.5" y="688.5" font-size="2.8" textLength="8.0" lengthAdjust="spacingAndGlyphs">C0952</text><text x="884.5" y="588.9" font-size="3.2" textLength="7.0" lengthAdjust="spacingAndGlyphs">L0908</text><text x="876.5" y="594.5" font-size="2.8" textLength="7.0" lengthAdjust="spacingAndGlyphs">C0248</text><text x="881.5" y="619.5" font-size="2.8" textLength="7.0" lengthAdjust="spacingAndGlyphs">C0353</text><text x="881.5" y="624.5" font-size="2.8" textLength="7.0" lengthAdjust="spacingAndGlyphs">R0985</text><text x="882.5" y="542.5" font-size="2.8" textLength="7.0" lengthAdjust="spacingAndGlyphs">L0493</text><text x="881.5" y="547.5" font-size="2.8" textLength="11.0" lengthAdjust="spacingAndGlyphs">D0463</text><text x="874.5" y="555.5" font-size="2.8" textLength="17.0" lengthAdjust="spacingAndGlyphs">C0975</text><text x="866.5" y="561.5" font-size="2.8" textLength="7.0" lengthAdjust="spacingAndGlyphs">L0104</text><text x="886.5" y="579.9" font-size="3.2" textLength="7.0" lengthAdjust="spacingAndGlyphs">R0539</text><text x="886.5" y="590.5" font-size="2.8" textLength="6.0" lengthAdjust="spacingAndGlyphs">C0855</text><text transform="translate(950.0,662.0) rotate(-90)" font-size="2.8" textLength="6.0" lengthAdjust="spacingAndGlyphs">C0413</text><text x="952.5" y="657.5" font-size="2.8" textLength="7.0" lengthAdjust="spacingAndGlyphs">R0453</text><text x="952.5" y="662.0" font-size="2.8" textLength="7.0" lengthAdjust="spacingAndGlyphs">R0175</text><text transform="translate(959.5,671.5) rotate(-90)" font-size="2.8" textLength="7.0" lengthAdjust="spacingAndGlyphs">D0216</text><text transform="translate(963.5,671.5) rotate(-90)" font-size="2.8" textLength="7.0" lengthAdjust="spacingAndGlyphs">D0472</text><text x="971.5" y="656.9" font-size="3.2" textLength="7.0" lengthAdjust="spacingAndGlyphs">R0616</text><text x="963.5" y="660.5" font-size="2.8" textLength="6.0" lengthAdjust="spacingAndGlyphs">R0712</text><text transform="translate(982.5,671.5) rotate(-90)" font-size="2.8" textLength="7.0" lengthAdjust="spacingAndGlyphs">C0302</text><text transform="translate(787.0,746.5) rotate(-90)" font-size="2.4" textLength="7.0" lengthAdjust="spacingAndGlyphs">R0829</text><text x="800.5" y="732.5" font-size="2.8" textLength="7.0" lengthAdjust="spacingAndGlyphs">D0852</text><text transform="translate(803.5,741.5) rotate(-90)" font-size="2.8" textLength="7.0" lengthAdjust="spacingAndGlyphs">R0920</text><text transform="translate(811.0,747.5) rotate(-90)" font-size="2.4" textLength="6.0" lengthAdjust="spacingAndGlyphs">C0282</text><text transform="translate(823.5,745.5) rotate(-90)" font-size="2.8" textLength="6.0" lengthAdjust="spacingAndGlyphs">R0430</text><text x="825.5" y="748.9" font-size="3.2" textLength="15.0" lengthAdjust="spacingAndGlyphs">C0448</text></g>
<!--PCB2E-->
</svg>

    </div>
  </div>
  <div id="vsb" class="abs">
    <div class="abs" style="left:0;top:0;width:15px;height:17px;border-bottom:1px solid #9a9a9a"><svg width="15" height="16"><path class="chev" d="M4 10l3.500-4 3.500 4"/></svg></div>
    <div class="abs" style="left:0;top:17px;width:15px;height:320px;background:#dcdcdc;border-bottom:1px solid #8a8a8a"><svg width="15" height="319"><path d="M4 156.500h7M4 159.500h7M4 162.500h7" stroke="#555" stroke-width="1.200"/></svg></div>
    <div class="abs" style="left:0;top:656px;width:15px;height:16px;border-top:1px solid #d0d0d0"><svg width="15" height="16"><path class="chev" d="M4 6l3.500 4 3.500-4"/></svg></div>
  </div>
  <div id="vbot" class="abs"></div>
  <div class="abs" style="left:0;top:2px;width:1px;height:724px;background:#9a9a9a"></div>
</div>
<div id="status" class="abs">
  <div class="abs mono" style="left:0;top:6px;line-height:14px;color:#0a1030">Version:1.0.0.52</div>
  <div class="abs mono" style="right:3px;top:6px;line-height:14px;color:#fff">Current [G185_T409S<u>i</u>t5021S_Parts Placement]</div>
</div>
</body>
</html>
